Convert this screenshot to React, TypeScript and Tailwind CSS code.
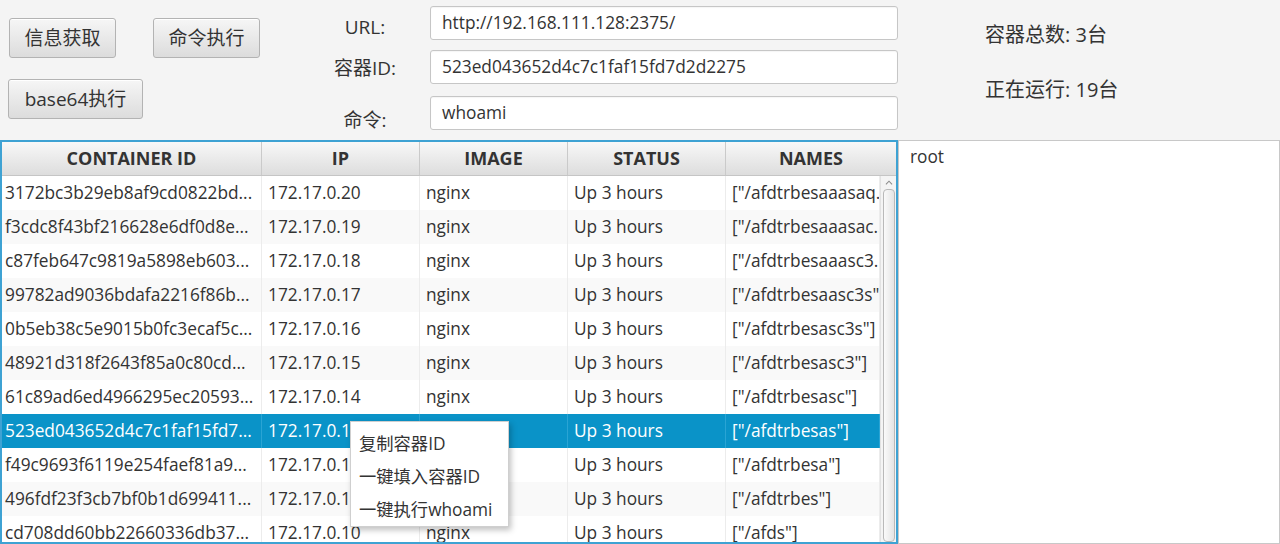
import React from "react";

type Row = { id: string; ip: string; image: string; status: string; names: string };

const rows: Row[] = [
  { id: "3172bc3b29eb8af9cd0822bd...", ip: "172.17.0.20", image: "nginx", status: "Up 3 hours", names: '["/afdtrbesaaasaq...."]' },
  { id: "f3cdc8f43bf216628e6df0d8e...", ip: "172.17.0.19", image: "nginx", status: "Up 3 hours", names: '["/afdtrbesaaasac...."]' },
  { id: "c87feb647c9819a5898eb603...", ip: "172.17.0.18", image: "nginx", status: "Up 3 hours", names: '["/afdtrbesaaasc3...."]' },
  { id: "99782ad9036bdafa2216f86b...", ip: "172.17.0.17", image: "nginx", status: "Up 3 hours", names: '["/afdtrbesaasc3s"]' },
  { id: "0b5eb38c5e9015b0fc3ecaf5c...", ip: "172.17.0.16", image: "nginx", status: "Up 3 hours", names: '["/afdtrbesasc3s"]' },
  { id: "48921d318f2643f85a0c80cd...", ip: "172.17.0.15", image: "nginx", status: "Up 3 hours", names: '["/afdtrbesasc3"]' },
  { id: "61c89ad6ed4966295ec20593...", ip: "172.17.0.14", image: "nginx", status: "Up 3 hours", names: '["/afdtrbesasc"]' },
  { id: "523ed043652d4c7c1faf15fd7...", ip: "172.17.0.13", image: "nginx", status: "Up 3 hours", names: '["/afdtrbesas"]' },
  { id: "f49c9693f6119e254faef81a9...", ip: "172.17.0.12", image: "nginx", status: "Up 3 hours", names: '["/afdtrbesa"]' },
  { id: "496fdf23f3cb7bf0b1d699411...", ip: "172.17.0.11", image: "nginx", status: "Up 3 hours", names: '["/afdtrbes"]' },
  { id: "cd708dd60bb22660336db37...", ip: "172.17.0.10", image: "nginx", status: "Up 3 hours", names: '["/afds"]' },
];

const SELECTED = 7;

function FxButton({ label, className = "" }: { label: string; className?: string }) {
  return (
    <button
      className={`h-[40px] rounded-[3px] border border-[#b3b3b3] bg-gradient-to-b from-[#f6f6f6] to-[#dcdcdc] text-[19px] text-[#333] shadow-[inset_0_1px_0_#ffffff] ${className}`}
    >
      {label}
    </button>
  );
}

function FxInput({ value, className = "" }: { value: string; className?: string }) {
  return (
    <div
      className={`flex h-[34px] items-center rounded-[3px] border border-[#c6c6c6] bg-white pl-[11px] text-[17.3px] text-[#333] shadow-[inset_0_1px_1px_rgba(0,0,0,0.04)] ${className}`}
    >
      {value}
    </div>
  );
}

const colW = ["w-[260px]", "w-[158px]", "w-[148px]", "w-[158px]", "w-[154px]"];
const headW = ["w-[260px]", "w-[158px]", "w-[148px]", "w-[158px]", "w-[170px]"];
const headers = ["CONTAINER ID", "IP", "IMAGE", "STATUS", "NAMES"];

export default function App() {
  return (
    <div className="relative h-[544px] w-[1280px] overflow-hidden bg-[#f4f4f4] font-['Open_Sans','Noto_Sans_CJK_SC',sans-serif] text-[#333]">
      {/* top form */}
      <div className="flex h-[140px]">
        <div className="w-[300px] pl-[9px] pt-[18px]">
          <div className="flex gap-[37px]">
            <FxButton label="信息获取" className="w-[107px]" />
            <FxButton label="命令执行" className="w-[107px]" />
          </div>
          <FxButton label="base64执行" className="ml-[-1px] mt-[21px] w-[135px]" />
        </div>

        <div className="flex w-[130px] flex-col items-center pt-[10px] text-[19px]">
          <div className="h-[34px] leading-[34px]">URL:</div>
          <div className="mt-[7px] h-[34px] leading-[34px]">容器ID:</div>
          <div className="mt-[18px] h-[34px] leading-[34px]">命令:</div>
        </div>

        <div className="flex w-[468px] flex-col pt-[6px]">
          <FxInput value="http://192.168.111.128:2375/" />
          <FxInput value="523ed043652d4c7c1faf15fd7d2d2275" className="mt-[10px]" />
          <FxInput value="whoami" className="mt-[12px]" />
        </div>

        <div className="pl-[87px] pt-[22px] text-[20px]">
          <div className="h-[26px] leading-[26px]">容器总数: 3台</div>
          <div className="mt-[29px] h-[26px] leading-[26px]">正在运行: 19台</div>
        </div>
      </div>

      {/* table + output */}
      <div className="flex h-[404px]">
        <div className="flex h-full w-[898px] flex-col overflow-hidden border-2 border-[#3ea2d3] bg-white">
          <div className="flex h-[34px] shrink-0 border-b border-[#c5c5c5] bg-gradient-to-b from-[#f8f8f8] to-[#dddddd]">
            {headers.map((h, i) => (
              <div
                key={h}
                className={`${headW[i]} flex items-center justify-center ${i < 4 ? "border-r border-[#cacaca]" : ""} text-[18px] font-bold text-[#333]`}
              >
                {h}
              </div>
            ))}
          </div>
          <div className="flex min-h-0 flex-1">
            <div className="w-[878px] overflow-hidden">
              {rows.map((r, i) => {
                const sel = i === SELECTED;
                const bg = sel ? "bg-[#0a93c8] text-white" : i % 2 === 0 ? "bg-white" : "bg-[#f9f9f9]";
                const cells = [r.id, r.ip, r.image, r.status, r.names];
                return (
                  <div key={r.id} className={`flex h-[34px] text-[17.3px] ${bg}`}>
                    {cells.map((c, j) => (
                      <div
                        key={j}
                        className={`${colW[j]} flex items-center overflow-hidden whitespace-nowrap border-r ${
                          sel ? "border-[#2aa4d4]" : "border-[#ececec]"
                        } ${j === 0 ? "pl-[3px]" : "pl-[6px]"}`}
                      >
                        {c}
                      </div>
                    ))}
                  </div>
                );
              })}
            </div>
            {/* scrollbar */}
            <div className="flex w-[16px] flex-col items-center border-l border-[#e2e2e2] bg-[#f4f4f4]">
              <svg width="10" height="8" viewBox="0 0 10 8" className="mt-[3px]">
                <path d="M1.5 6 L5 2.5 L8.5 6" fill="none" stroke="#8a8a8a" strokeWidth="1.2" />
              </svg>
              <div className="mt-[3px] h-[400px] w-[12px] rounded-[4px] border border-[#b9b9b9] bg-gradient-to-r from-[#fafafa] to-[#e4e4e4]" />
            </div>
          </div>
        </div>

        <div className="h-full flex-1 border border-[#c8c8c8] bg-white pl-[11px] pt-[4px] text-[17.3px] leading-[24px]">
          root
        </div>
      </div>

      {/* context menu */}
      <div className="absolute left-[350px] top-[421px] w-[159px] border border-[#cfcfcf] bg-white pt-[5px] text-[17.3px] shadow-[2px_3px_6px_rgba(0,0,0,0.25)]">
        {["复制容器ID", "一键填入容器ID", "一键执行whoami"].map((t) => (
          <div key={t} className="h-[33px] pl-[8px] leading-[33px]">
            {t}
          </div>
        ))}
      </div>
    </div>
  );
}
